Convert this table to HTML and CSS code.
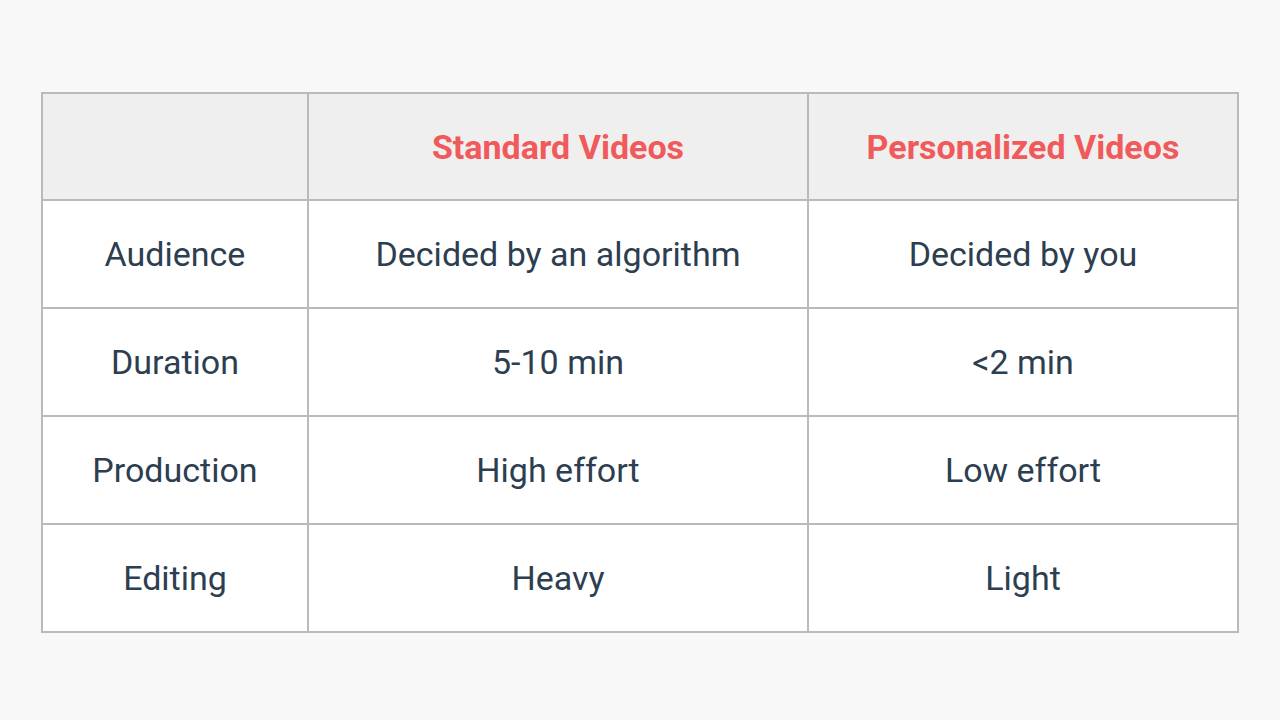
FILE: index.html
```html
<!DOCTYPE html>
<html lang="en">
<head>
<meta charset="utf-8">
<title>Standard vs Personalized Videos</title>
<link rel="stylesheet" href="styles.css">
</head>
<body>
<main class="page">
  <table class="compare">
    <colgroup>
      <col class="col-label">
      <col class="col-std">
      <col class="col-pers">
    </colgroup>
    <thead>
      <tr>
        <th class="blank"></th>
        <th>Standard Videos</th>
        <th>Personalized Videos</th>
      </tr>
    </thead>
    <tbody>
      <tr><td>Audience</td><td>Decided by an algorithm</td><td>Decided by you</td></tr>
      <tr><td>Duration</td><td>5-10 min</td><td>&lt;2 min</td></tr>
      <tr><td>Production</td><td>High effort</td><td>Low effort</td></tr>
      <tr><td>Editing</td><td>Heavy</td><td>Light</td></tr>
    </tbody>
  </table>
</main>
</body>
</html>
```
FILE: styles.css
```css
html, body {
  margin: 0;
  padding: 0;
  background: #f9f8f8;
}
.page {
  width: 1280px;
  height: 720px;
  padding: 92px 0 0 41px;
  box-sizing: border-box;
  font-family: Roboto, "Liberation Sans", sans-serif;
}
.compare {
  border-collapse: collapse;
  table-layout: fixed;
  width: 1196px;
}
.col-label { width: 266px; }
.col-std { width: 500px; }
.col-pers { width: 430px; }
.compare th,
.compare td {
  border: 2px solid #bdb9b9;
  height: 106px;
  padding: 0;
  text-align: center;
  vertical-align: middle;
  font-size: 34px;
  color: #2c3e50;
  font-weight: 400;
}
.compare thead th {
  background: #efefef;
  color: #f05a5a;
  font-weight: 700;
  height: 105px;
}
.compare tbody td {
  background: #ffffff;
}
```
